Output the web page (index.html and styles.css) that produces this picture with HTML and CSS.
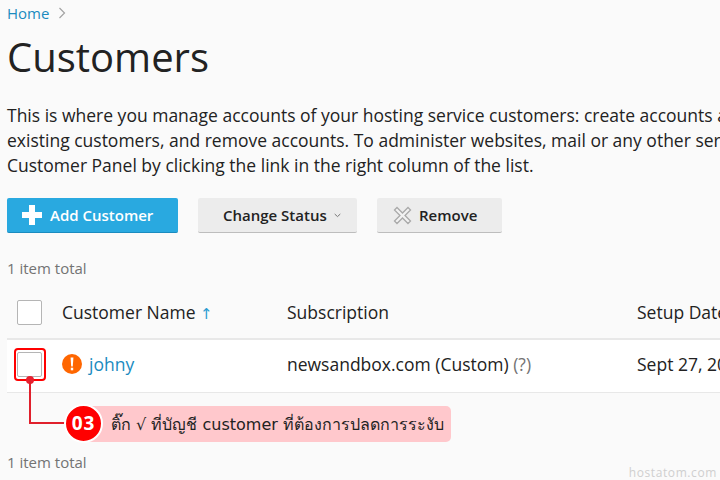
FILE: index.html
```html
<!DOCTYPE html>
<html lang="en">
<head>
<meta charset="utf-8">
<title>Customers</title>
<link rel="stylesheet" href="styles.css">
</head>
<body>
<main class="page">
  <nav class="crumbs"><a class="link" href="#">Home</a>
    <svg class="crumb-sep" width="8" height="12" viewBox="0 0 8 12"><path d="M1.500 1l5 5-5 5" fill="none" stroke="#a3a3a3" stroke-width="1.200"/></svg>
  </nav>
  <h1 class="title">Customers</h1>
  <p class="intro">This is where you manage accounts of your hosting service customers: create accounts and view or change<br>existing customers, and remove accounts. To administer websites, mail or any other services of a customer, go to the<br>Customer Panel by clicking the link in the right column of the list.</p>
  <div class="toolbar">
    <button class="btn btn-primary">
      <svg width="20" height="20" viewBox="0 0 20 20"><path d="M7 0h6v7h7v6h-7v7H7v-7H0V7h7z" fill="#fff"/></svg>
      Add Customer</button>
    <button class="btn btn-status">Change Status
      <svg class="caret" width="7" height="5" viewBox="0 0 7 5"><path d="M.7 1l2.800 2.600L6.300 1" fill="none" stroke="#777" stroke-width="1"/></svg>
    </button>
    <button class="btn btn-remove">
      <svg width="19" height="19" viewBox="0 0 19 19"><path d="M4 1.500L9.500 7 15 1.500 17.500 4 12 9.500 17.500 15 15 17.500 9.500 12 4 17.500 1.500 15 7 9.500 1.500 4z" fill="#f2f2f2" stroke="#a9a9a9" stroke-width="1.300"/></svg>
      Remove</button>
  </div>
  <div class="total">1 item total</div>
  <div class="table">
    <div class="row head">
      <div class="cell"><span class="check"></span></div>
      <div class="cell">Customer Name <span class="sort">↑</span></div>
      <div class="cell">Subscription</div>
      <div class="cell">Setup Date</div>
    </div>
    <div class="row body-row">
      <div class="cell"><span class="check"></span></div>
      <div class="cell name-cell">
        <svg width="20" height="20" viewBox="0 0 20 20"><circle cx="10" cy="10" r="10" fill="#f60"/><path d="M8.600 3.500h2.800l-.6 9H9.200z" fill="#fff"/><rect x="8.800" y="13.700" width="2.400" height="2.600" fill="#fff"/></svg>
        <a class="link" href="#">johny</a></div>
      <div class="cell">newsandbox.com (Custom) <span class="hint">(?)</span></div>
      <div class="cell">Sept 27, 2017</div>
    </div>
  </div>
  <div class="total total-bottom">1 item total</div>
</main>

<div class="focus-box"></div>
<svg class="connector" width="60" height="60" viewBox="0 0 60 60"><circle cx="6" cy="5" r="4" fill="#e8202f"/><path d="M6 5v43h36" fill="none" stroke="#e0202c" stroke-width="2"/></svg>
<div class="callout"><span class="callout-text">ติ๊ก √ ที่บัญชี customer ที่ต้องการปลดการระงับ</span></div>
<div class="badge">03</div>
<div class="watermark">hostatom.com</div>
</body>
</html>
```

FILE: styles.css
```css
html, body {
  margin: 0;
  height: 480px;
  overflow: hidden;
  background: #fafafa;
}
body {
  position: relative;
  width: 720px;
  font-family: "Open Sans", sans-serif;
  font-size: 17.5px;
  color: #222;
}
.page {
  padding-left: 7px;
  width: 1000px;
}
.link {
  color: #1a8bbf;
  text-decoration: none;
}
.crumbs {
  display: flex;
  align-items: center;
  gap: 9px;
  height: 20px;
  padding-top: 3px;
  font-size: 15px;
  line-height: 20px;
}
.title {
  margin: 8px 0 0;
  font-size: 40px;
  font-weight: 400;
  line-height: 52px;
}
.intro {
  margin: 20px 0 0;
  font-size: 17.500px;
  line-height: 25px;
  white-space: nowrap;
}
.toolbar {
  display: flex;
  gap: 20px;
  margin-top: 20px;
}
.btn {
  display: flex;
  align-items: center;
  height: 35px;
  padding: 0;
  border: 0;
  border-bottom: 1px solid #bdbdbd;
  border-radius: 2px;
  background: #ececec;
  font: 600 15px "Open Sans", sans-serif;
  color: #222;
}
.btn-primary {
  width: 171px;
  padding-left: 15px;
  gap: 8px;
  background: #29a9e0;
  border-bottom-color: #1a8bbf;
  color: #fff;
}
.btn-status {
  width: 159px;
  padding-left: 25px;
  gap: 7px;
}
.btn-remove {
  width: 125px;
  padding-left: 16px;
  gap: 7px;
}
.total {
  margin-top: 25px;
  font-size: 15px;
  line-height: 20px;
  color: #737373;
}
.table {
  margin-top: 12px;
  font-size: 17.500px;
}
.row {
  display: grid;
  grid-template-columns: 55px 225px 350px 1fr;
  align-items: center;
}
.head {
  height: 44px;
  padding-bottom: 4px;
  border-bottom: 2px solid #e8e8e8;
}
.body-row {
  height: 48px;
  padding-bottom: 4px;
  background: #fff;
  border-bottom: 1px solid #e8e8e8;
}
.cell {
  white-space: nowrap;
}
.check {
  display: block;
  box-sizing: border-box;
  width: 25px;
  height: 25px;
  margin-left: 10px;
  background: #fff;
  border: 1px solid #b5b5b5;
  border-radius: 2px;
}
.sort {
  color: #2a9bd0;
  font-size: 15px;
  font-family: "DejaVu Sans", sans-serif;
}
.name-cell {
  display: flex;
  align-items: center;
  gap: 7px;
}
.hint {
  color: #737373;
}
.total-bottom {
  margin-top: 59px;
}
.focus-box {
  position: absolute;
  left: 14px;
  top: 348px;
  width: 28px;
  height: 29px;
  border: 2px solid #f00;
  border-radius: 4px;
}
.connector {
  position: absolute;
  left: 24px;
  top: 375px;
}
.callout {
  position: absolute;
  left: 84px;
  top: 406px;
  width: 367px;
  height: 36px;
  display: flex;
  align-items: center;
  box-sizing: border-box;
  padding-left: 27px;
  background: #ffc8cc;
  border-radius: 0 5px 5px 0;
}
.callout-text {
  font-family: "DejaVu Sans", "Noto Sans", sans-serif;
  font-size: 16px;
  white-space: nowrap;
  color: #222;
}
.badge {
  position: absolute;
  left: 64px;
  top: 404px;
  box-sizing: border-box;
  width: 39px;
  height: 39px;
  border: 2px solid #fff;
  border-radius: 50%;
  background: #f00;
  color: #fff;
  font-size: 19px;
  font-weight: 700;
  line-height: 35px;
  text-align: center;
  letter-spacing: 1px;
}
.watermark {
  position: absolute;
  right: 3px;
  top: 465px;
  font-size: 12px;
  line-height: 16px;
  letter-spacing: .6px;
  color: #cfcfcf;
}
```
